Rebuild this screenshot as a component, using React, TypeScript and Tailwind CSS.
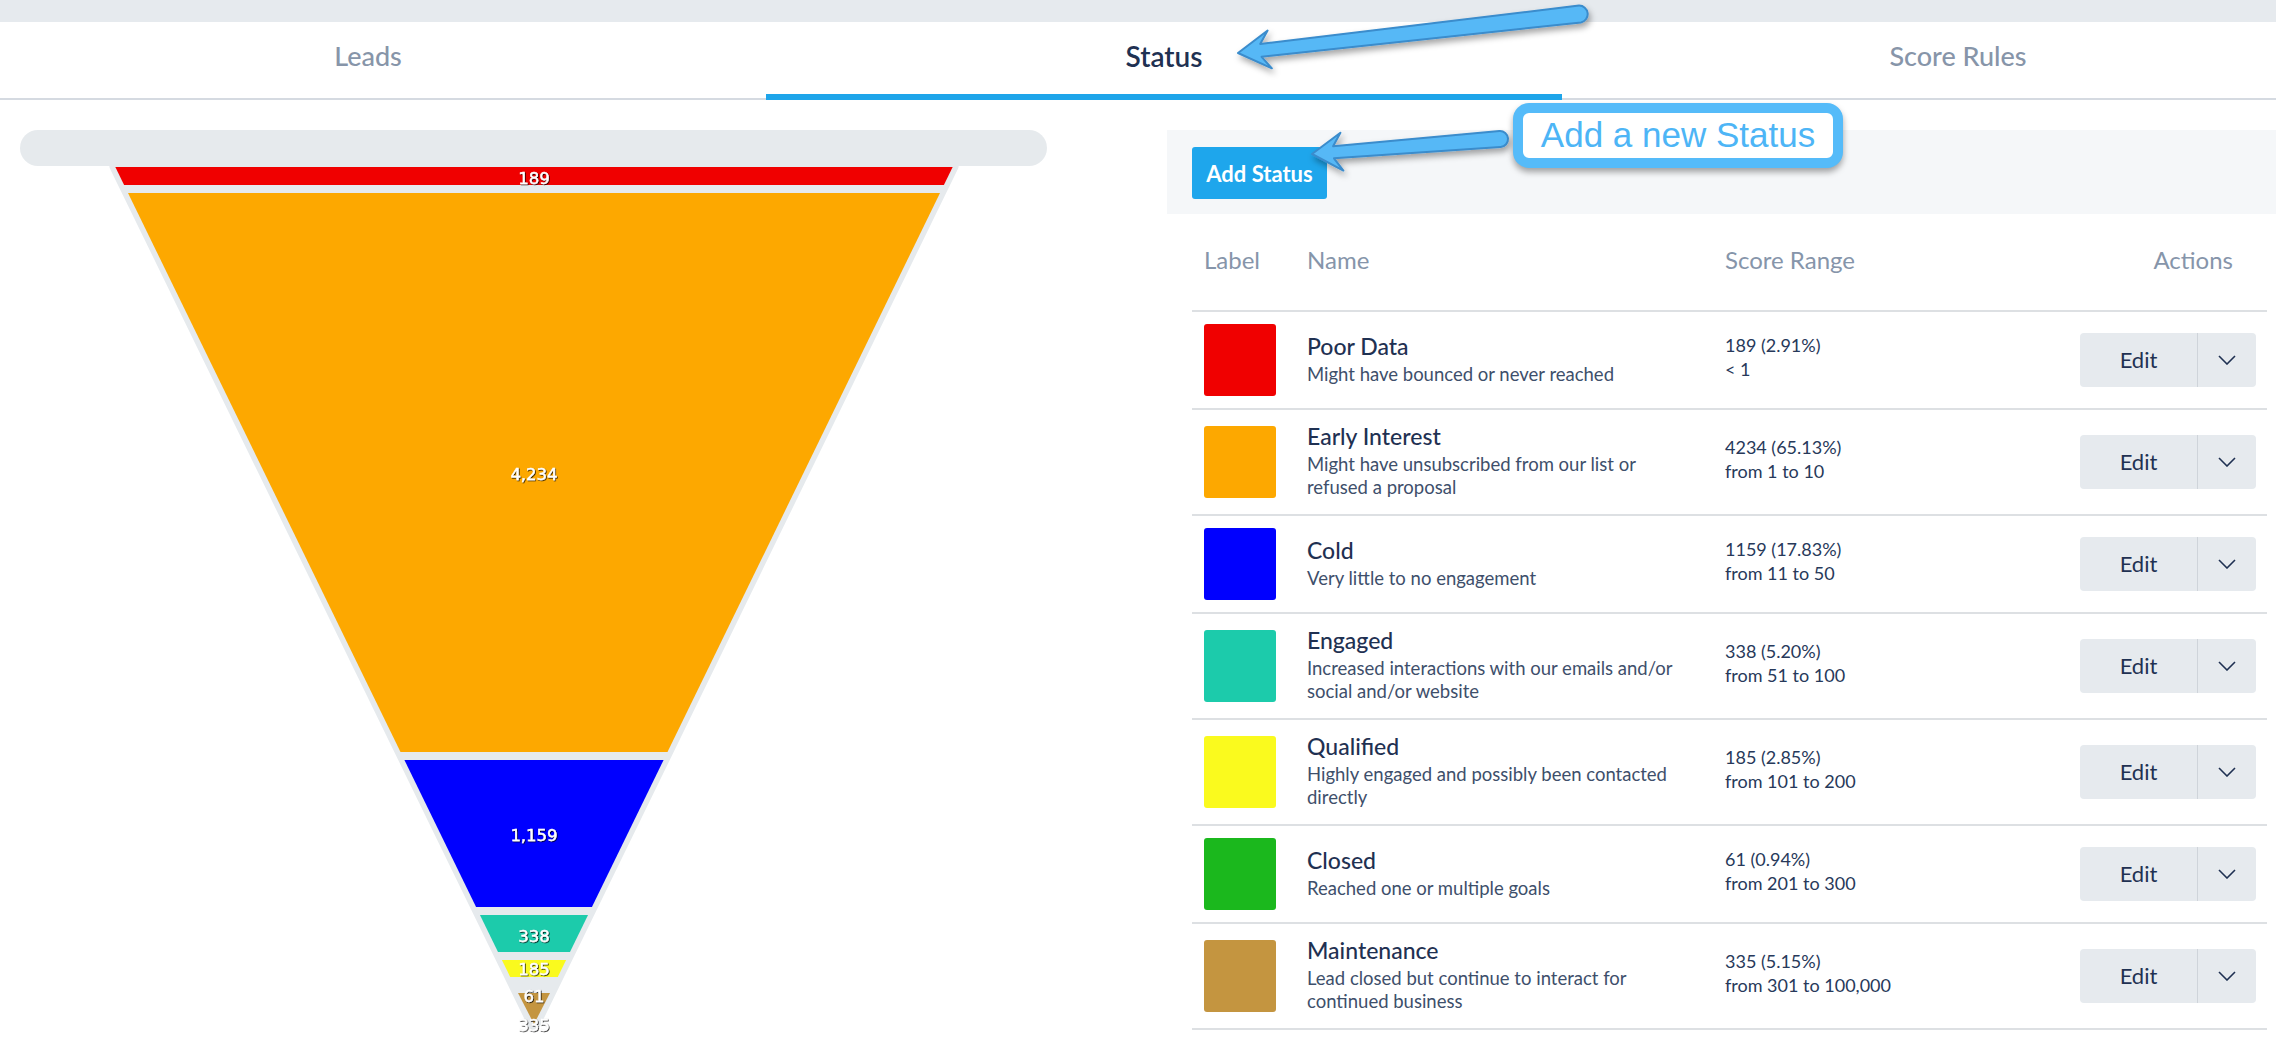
import React from "react";

type Status = {
  name: string;
  desc: string[];
  count: string;
  range: string;
  color: string;
};

const statuses: Status[] = [
  { name: "Poor Data", desc: ["Might have bounced or never reached"], count: "189 (2.91%)", range: "< 1", color: "bg-[#f00000]" },
  { name: "Early Interest", desc: ["Might have unsubscribed from our list or", "refused a proposal"], count: "4234 (65.13%)", range: "from 1 to 10", color: "bg-[#fda800]" },
  { name: "Cold", desc: ["Very little to no engagement"], count: "1159 (17.83%)", range: "from 11 to 50", color: "bg-[#0000ff]" },
  { name: "Engaged", desc: ["Increased interactions with our emails and/or", "social and/or website"], count: "338 (5.20%)", range: "from 51 to 100", color: "bg-[#1ccbab]" },
  { name: "Qualified", desc: ["Highly engaged and possibly been contacted", "directly"], count: "185 (2.85%)", range: "from 101 to 200", color: "bg-[#fafa1e]" },
  { name: "Closed", desc: ["Reached one or multiple goals"], count: "61 (0.94%)", range: "from 201 to 300", color: "bg-[#1bb81d]" },
  { name: "Maintenance", desc: ["Lead closed but continue to interact for", "continued business"], count: "335 (5.15%)", range: "from 301 to 100,000", color: "bg-[#c49540]" },
];

// funnel edges (page coordinates)
const xl = (y: number) => 128 + 0.4875 * (y - 193);
const xr = (y: number) => 1068 - xl(y);
const seg = (top: number, bottom: number) =>
  `${xl(top)},${top} ${xr(top)},${top} ${xr(bottom)},${bottom} ${xl(bottom)},${bottom}`;

const segments = [
  { top: 167, bottom: 185, fill: "#f00000" },
  { top: 193, bottom: 752, fill: "#fda800" },
  { top: 760, bottom: 907, fill: "#0000ff" },
  { top: 915, bottom: 952, fill: "#1ccbab" },
  { top: 960, bottom: 977, fill: "#fafa1e" },
];

const labels = [
  { y: 178, text: "189" },
  { y: 474, text: "4,234" },
  { y: 835, text: "1,159" },
  { y: 936, text: "338" },
  { y: 969, text: "185" },
  { y: 996, text: "61" },
  { y: 1025, text: "335" },
];

const Funnel = () => (
  <svg width={1167} height={954} viewBox="0 100 1167 954" className="block">
    <defs>
      <filter id="lbl" x="-20%" y="-50%" width="140%" height="200%">
        <feDropShadow dx="0.8" dy="0.8" stdDeviation="0.4" floodColor="#000" floodOpacity="0.9" />
      </filter>
    </defs>
    <rect x={20} y={130} width={1027} height={36} rx={18} fill="#e6eaed" />
    <polygon
      points={`${xl(166)},166 ${xr(166)},166 534,1026`}
      fill="#e6eaed"
      stroke="#e6eaed"
      strokeWidth={11}
      strokeLinejoin="round"
    />
    {segments.map((s) => (
      <polygon key={s.top} points={seg(s.top, s.bottom)} fill={s.fill} />
    ))}
    <polygon points={`${xl(993)},993 ${xr(993)},993 534,1024`} fill="#c49540" />
    {labels.map((l) => (
      <text
        key={l.text}
        x={534}
        y={l.y}
        textAnchor="middle"
        dominantBaseline="central"
        fontFamily="'DejaVu Sans', sans-serif"
        fontSize={16.5}
        fill="#fff"
        stroke="#fff"
        strokeWidth={0.4}
        filter="url(#lbl)"
      >
        {l.text}
      </text>
    ))}
  </svg>
);

type Pt = [number, number];

const arrowPath = (H: Pt, T: Pt, L: number, W: number, w1: number, w2: number) => {
  const dx = T[0] - H[0];
  const dy = T[1] - H[1];
  const len = Math.hypot(dx, dy);
  const u: Pt = [dx / len, dy / len];
  const n: Pt = [-u[1], u[0]];
  const p = (a: number, b: number): string =>
    `${(H[0] + u[0] * a + n[0] * b).toFixed(1)},${(H[1] + u[1] * a + n[1] * b).toFixed(1)}`;
  return [
    `M${H[0]},${H[1]}`,
    `L${p(L, -W)}`,
    `L${p(L * 0.72, -w1)}`,
    `L${p(len, -w2)}`,
    `A${w2} ${w2} 0 0 1 ${p(len, w2)}`,
    `L${p(L * 0.72, w1)}`,
    `L${p(L, W)}`,
    "Z",
  ].join(" ");
};

const Arrows = () => (
  <svg width={2276} height={1054} className="pointer-events-none absolute left-0 top-0">
    <defs>
      <filter id="arrowShadow" x="-10%" y="-50%" width="120%" height="200%">
        <feDropShadow dx="2" dy="4" stdDeviation="3" floodColor="#000" floodOpacity="0.35" />
      </filter>
    </defs>
    <path
      d={arrowPath([1238, 53], [1580, 14], 32, 19, 6.5, 8.5)}
      fill="#56b8f6"
      stroke="#3a8ccc"
      strokeWidth={2}
      strokeLinejoin="round"
      filter="url(#arrowShadow)"
    />
    <path
      d={arrowPath([1312, 154], [1500, 139], 30, 19, 6, 8)}
      fill="#56b8f6"
      stroke="#3a8ccc"
      strokeWidth={2}
      strokeLinejoin="round"
      filter="url(#arrowShadow)"
    />
  </svg>
);

const Chevron = () => (
  <svg width="18" height="10" viewBox="0 0 18 10">
    <polyline points="1,1 9,9 17,1" fill="none" stroke="#1f3152" strokeWidth="1.6" />
  </svg>
);

export default function App() {
  return (
    <div className="relative min-h-screen w-full overflow-hidden bg-white font-['Lato',sans-serif]">
      <div className="h-[22px] bg-[#e6eaee]" />

      {/* tabs */}
      <div className="flex h-[78px]">
        <div className="flex w-[766px] items-center justify-center border-b-2 border-[#d5dae1] pb-[8px] pr-[30px] text-[27px] font-medium text-[#8795a9]">
          Leads
        </div>
        <div className="flex w-[796px] items-center justify-center border-b-[6px] border-[#1ea5ea] pb-[4px] text-[28px] font-semibold text-[#1f3152]">
          Status
        </div>
        <div className="flex flex-1 items-center justify-center border-b-2 border-[#d5dae1] pb-[8px] pl-[78px] text-[27px] font-medium text-[#8795a9]">
          Score Rules
        </div>
      </div>

      <div className="flex">
        <div className="w-[1167px] shrink-0">
          <Funnel />
        </div>

        <div className="flex-1 pt-[30px]">
          <div className="bg-[#f5f7f9] pb-[15px] pl-[25px] pt-[17px]">
            <button className="h-[52px] w-[135px] rounded-[3px] bg-[#1ea6ec] text-[22px] font-bold text-white">
              Add Status
            </button>
          </div>

          <div className="ml-[25px] mr-[9px]">
            <div className="grid h-[98px] grid-cols-[115px_418px_1fr_auto] items-center border-b-2 border-[#dde0e3] pb-[4px] text-[24px] text-[#8695aa]">
              <div className="pl-[12px]">Label</div>
              <div>Name</div>
              <div>Score Range</div>
              <div className="pr-[34px]">Actions</div>
            </div>

            {statuses.map((s) => (
              <div
                key={s.name}
                className="grid grid-cols-[115px_418px_1fr_auto] items-center border-b-2 border-[#dde0e3] py-[9px]"
              >
                <div className="pl-[12px]">
                  <div className={`my-[3px] h-[72px] w-[72px] rounded-[3px] ${s.color}`} />
                </div>
                <div className="pb-[6px]">
                  <div className="text-[23px] font-medium leading-[34px] text-[#1f3152]">{s.name}</div>
                  {s.desc.map((line) => (
                    <div key={line} className="whitespace-nowrap text-[18.5px] leading-[23px] text-[#3e4f6b]">
                      {line}
                    </div>
                  ))}
                </div>
                <div className="pb-[6px] text-[18px] leading-[24px] text-[#27395a]">
                  <div>{s.count}</div>
                  <div>{s.range}</div>
                </div>
                <div className="pr-[11px]">
                  <div className="flex h-[54px] w-[176px] overflow-hidden rounded-[4px] bg-[#e6eaee]">
                    <div className="flex w-[117px] items-center justify-center pb-[2px] text-[22px] text-[#1f3152]">
                      Edit
                    </div>
                    <div className="flex flex-1 items-center justify-center border-l border-[#cfd4da]">
                      <Chevron />
                    </div>
                  </div>
                </div>
              </div>
            ))}
          </div>
        </div>
      </div>

      <Arrows />

      <div className="absolute left-[1513px] top-[103px] flex h-[65px] w-[330px] items-center justify-center rounded-[16px] border-[10px] border-[#55bbf9] bg-white font-['Liberation_Sans',sans-serif] text-[35px] text-[#4db5f6] shadow-[0_4px_6px_rgba(0,0,0,0.35)]">
        Add a new Status
      </div>
    </div>
  );
}
